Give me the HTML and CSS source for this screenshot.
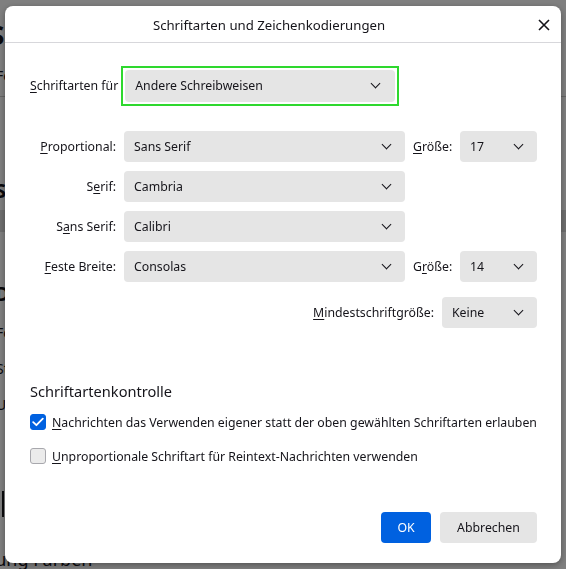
FILE: index.html
```html
<!DOCTYPE html>
<html lang="de">
<head>
    <meta charset="UTF-8">
    <meta name="viewport" content="width=device-width, initial-scale=1.0">
    <title>Schriftarten und Zeichenkodierungen</title>
    <link rel="stylesheet" href="styles.css">
</head>
<body>
    <!-- settings page behind the dialog -->
    <div class="page">
        <div class="page-title">Schriftarten</div>
        <div class="page-line">Fenster</div>
        <div class="page-rule"></div>
        <div class="page-head">Sprache</div>
        <div class="page-band"></div>
        <div class="page-head tall">Darstellung</div>
        <div class="page-line">Formular</div>
        <div class="page-line">Standard</div>
        <div class="page-line">Unicode</div>
        <div class="page-bar"></div>
        <div class="page-foot">Darstellung Farben</div>
    </div>

    <div class="backdrop">
        <div class="dialog">
            <div class="dialog-header">
                <span class="dialog-title">Schriftarten und Zeichenkodierungen</span>
                <button class="close-btn" aria-label="Schließen">
                    <svg width="12" height="12" viewBox="0 0 12 12"><path d="M1 1 L11 11 M11 1 L1 11" stroke="#15141a" stroke-width="1.6" fill="none"/></svg>
                </button>
            </div>

            <div class="dialog-body">
                <div class="lang-row">
                    <label class="label"><u>S</u>chriftarten für</label>
                    <div class="focus-ring">
                        <div class="select lang-select">Andere Schreibweisen<span class="chev"></span></div>
                    </div>
                </div>

                <div class="font-grid">
                    <label class="label right"><u>P</u>roportional:</label>
                    <div class="select">Sans Serif<span class="chev"></span></div>
                    <label class="label"><u>G</u>röße:</label>
                    <div class="select">17<span class="chev"></span></div>

                    <label class="label right">S<u>e</u>rif:</label>
                    <div class="select">Cambria<span class="chev"></span></div>
                    <span></span><span></span>

                    <label class="label right">S<u>a</u>ns Serif:</label>
                    <div class="select">Calibri<span class="chev"></span></div>
                    <span></span><span></span>

                    <label class="label right"><u>F</u>este Breite:</label>
                    <div class="select">Consolas<span class="chev"></span></div>
                    <label class="label">G<u>r</u>öße:</label>
                    <div class="select">14<span class="chev"></span></div>
                </div>

                <div class="min-row">
                    <label class="label"><u>M</u>indestschriftgröße:</label>
                    <div class="select min">Keine<span class="chev"></span></div>
                </div>

                <h2 class="section-title">Schriftartenkontrolle</h2>

                <label class="check-row">
                    <span class="checkbox checked">
                        <svg width="12" height="10" viewBox="0 0 12 10"><path d="M1.2 5.2 L4.4 8.2 L10.8 1.6" stroke="#fff" stroke-width="1.8" fill="none" stroke-linecap="round" stroke-linejoin="round"/></svg>
                    </span>
                    <span><u>N</u>achrichten das Verwenden eigener statt der oben gewählten Schriftarten erlauben</span>
                </label>
                <label class="check-row">
                    <span class="checkbox"></span>
                    <span><u>U</u>nproportionale Schriftart für Reintext-Nachrichten verwenden</span>
                </label>
            </div>

            <div class="dialog-buttons">
                <button class="btn primary">OK</button>
                <button class="btn">Abbrechen</button>
            </div>
        </div>
    </div>
</body>
</html>
```

FILE: styles.css
```css
* {
    margin: 0;
    padding: 0;
    box-sizing: border-box;
}

body {
    font-family: "Noto Sans", "Open Sans", sans-serif;
    color: #15141a;
    background: #fff;
    overflow: hidden;
    height: 569px;
}

/* page behind */
.page {
    margin-left: -60px;
    padding-top: 20px;
    font-size: 14px;
}

.page-title {
    font-size: 26px;
    font-weight: 700;
    margin-left: 50px;
    line-height: 30px;
}

.page-line {
    margin-left: 56px;
    line-height: 20px;
    margin-top: 16px;
}

.page-rule {
    height: 1px;
    background: #ccc;
    margin-top: 10px;
}

.page-head {
    font-size: 20px;
    font-weight: 700;
    margin: 80px 0 0 55px;
}

.page-head.tall {
    margin-top: 48px;
}

.page-band {
    height: 22px;
    background: #ddd;
    margin-top: 6px;
}

.page-bar {
    width: 2px;
    height: 26px;
    background: #15141a;
    margin: 76px 0 0 62px;
}

.page-foot {
    font-size: 18px;
    margin: 30px 0 0 -10px;
}

/* dimmed layer + dialog */
.backdrop {
    position: fixed;
    inset: 0;
    background: rgba(0, 0, 0, 0.5);
    display: flex;
    align-items: center;
    justify-content: center;
}

.dialog {
    width: 556px;
    height: 557px;
    margin-top: -1px;
    background: #fff;
    border-radius: 8px;
    box-shadow: 0 2px 6px rgba(0, 0, 0, 0.35);
    display: flex;
    flex-direction: column;
    font-size: 12.3px;
}

.dialog-header {
    height: 37px;
    border-bottom: 1px solid #d7d7db;
    display: flex;
    align-items: center;
    justify-content: center;
    padding-right: 28px;
    position: relative;
}

.dialog-title {
    font-size: 13.2px;
    padding-top: 3px;
}

.close-btn {
    position: absolute;
    right: 10px;
    top: 12px;
    width: 14px;
    height: 14px;
    border: none;
    background: none;
    display: flex;
    align-items: center;
    justify-content: center;
}

.dialog-body {
    flex: 1;
    padding: 0 24px 0 25px;
}

.label {
    white-space: nowrap;
}

.label u, .check-row u {
    text-decoration-thickness: 1px;
    text-underline-offset: 2px;
}

.select {
    height: 31px;
    background: #e5e5e5;
    border-radius: 4px;
    display: flex;
    align-items: center;
    justify-content: space-between;
    padding: 0 15px 0 10px;
}

.chev {
    width: 7px;
    height: 7px;
    border-right: 1.6px solid #15141a;
    border-bottom: 1.6px solid #15141a;
    transform: rotate(45deg);
    margin-top: -4px;
}

.lang-row {
    display: flex;
    align-items: center;
    gap: 3px;
    margin-top: 23px;
}

.focus-ring {
    border: 2px solid #2ed82e;
    padding: 2px;
}

.lang-select {
    width: 270px;
    height: 32px;
    padding-right: 16px;
}

.font-grid {
    display: grid;
    grid-template-columns: 91px 281px 39px 77px;
    column-gap: 8px;
    row-gap: 9px;
    align-items: center;
    margin-top: 25px;
    margin-left: -5px;
}

.label.right {
    text-align: right;
}

.min-row {
    display: flex;
    justify-content: flex-end;
    align-items: center;
    gap: 8px;
    margin-top: 15px;
}

.select.min {
    width: 95px;
}

.section-title {
    font-size: 14.6px;
    font-weight: 400;
    margin-top: 53px;
}

.check-row {
    display: flex;
    align-items: center;
    gap: 6px;
    margin-top: 13px;
    white-space: nowrap;
}

.check-row + .check-row {
    margin-top: 17px;
}

.checkbox {
    width: 16px;
    height: 16px;
    border-radius: 3px;
    border: 1px solid #a8a8ad;
    background: #ebebeb;
    display: flex;
    align-items: center;
    justify-content: center;
}

.checkbox.checked {
    background: #0061e0;
    border-color: #0061e0;
}

.dialog-buttons {
    display: flex;
    justify-content: flex-end;
    gap: 9px;
    padding: 0 24px 20px 0;
}

.btn {
    font-family: inherit;
    font-size: 12.3px;
    height: 31px;
    border: none;
    border-radius: 4px;
    background: #e5e5e5;
    color: #15141a;
    padding: 0 16px;
}

.btn.primary {
    background: #0061e0;
    color: #fff;
    width: 50px;
}

.btn:not(.primary) {
    width: 97px;
}
```
